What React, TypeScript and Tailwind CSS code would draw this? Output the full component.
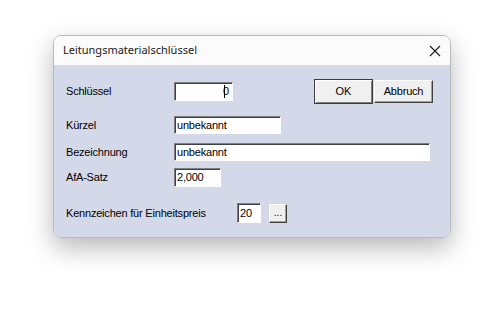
import React from 'react';

const sunken =
  'border border-t-[#7f7f7f] border-l-[#7f7f7f] border-b-white border-r-white shadow-[inset_1px_1px_0_#404040] bg-white';

function Field({ value, className }: { value: string; className: string }) {
  return (
    <div className={`${sunken} ${className} flex items-center pl-[2px] text-[11px] tracking-[-0.2px] text-black`}>
      {value}
    </div>
  );
}

function Label({ children }: { children: React.ReactNode }) {
  return <div className="w-[108px] shrink-0 text-[11px] tracking-[-0.2px] text-black">{children}</div>;
}

export default function App() {
  return (
    <div
      className="w-[503px] h-[309px] bg-white pl-[53px] pt-[35px]"
      style={{ fontFamily: "'Liberation Sans', Arial, sans-serif" }}
    >
      <div className="w-[398px] h-[203px] rounded-[8px] border border-[#b9b9b9] overflow-hidden shadow-[0_10px_26px_rgba(0,0,0,0.28)] flex flex-col">
        {/* title bar */}
        <div className="h-[29px] shrink-0 bg-[#fbfbfb] flex items-center pl-[9px] pr-[9px]">
          <span
            className="text-[11px] text-[#1a1a1a]"
            style={{ fontFamily: "'Noto Sans', 'Open Sans', sans-serif" }}
          >
            Leitungsmaterialschlüssel
          </span>
          <svg className="ml-auto" width="12" height="12" viewBox="0 0 12 12">
            <path d="M1 1 L11 11 M11 1 L1 11" stroke="#1a1a1a" strokeWidth="1.1" fill="none" />
          </svg>
        </div>

        {/* body */}
        <div className="flex-1 bg-[#d4d9ea] pl-[12px] pt-[14px] flex flex-col">
          <div className="h-[25px] flex items-center">
            <Label>Schlüssel</Label>
            <div className={`${sunken} w-[59px] h-[19px] flex items-center justify-end pr-[3px] text-[11px]`}>
              <span className="w-px h-[13px] bg-black -mr-[2px]" />
              0
            </div>
            <button className="ml-[81px] w-[59px] h-[25px] bg-[#f0f0f0] border border-[#3c3c3c] shadow-[inset_1px_1px_0_#ffffff,inset_-1px_-1px_0_#7f7f7f] text-[11px] text-black">
              OK
            </button>
            <button className="ml-[1px] w-[59px] h-[23px] bg-[#f0f0f0] border border-t-white border-l-white border-b-[#404040] border-r-[#404040] shadow-[inset_-1px_-1px_0_#a0a0a0] text-[11px] tracking-[-0.2px] text-black">
              Abbruch
            </button>
          </div>

          <div className="mt-[12px] h-[18px] flex items-center">
            <Label>Kürzel</Label>
            <Field value="unbekannt" className="w-[107px] h-[18px]" />
          </div>

          <div className="mt-[9px] h-[18px] flex items-center">
            <Label>Bezeichnung</Label>
            <Field value="unbekannt" className="w-[256px] h-[18px]" />
          </div>

          <div className="mt-[7px] h-[19px] flex items-center">
            <Label>AfA-Satz</Label>
            <Field value="2,000" className="w-[47px] h-[19px]" />
          </div>

          <div className="mt-[16px] h-[20px] flex items-center">
            <div className="w-[171px] shrink-0 text-[11px] tracking-[-0.2px] text-black">Kennzeichen für Einheitspreis</div>
            <Field value="20" className="w-[24px] h-[20px]" />
            <button className="ml-[8px] w-[18px] h-[19px] bg-[#f0f0f0] border border-t-white border-l-white border-b-[#404040] border-r-[#404040] shadow-[inset_-1px_-1px_0_#a0a0a0] text-[10px] leading-none text-black flex items-end justify-center pb-[4px]">
              ...
            </button>
          </div>
        </div>
      </div>
    </div>
  );
}
